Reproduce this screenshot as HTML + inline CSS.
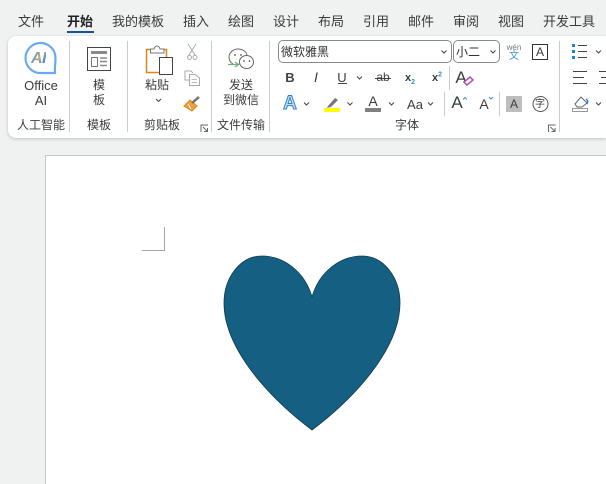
<!DOCTYPE html>
<html lang="zh"><head><meta charset="utf-8"><style>
html,body{margin:0;padding:0;width:606px;height:484px;overflow:hidden}
#wrap{position:relative;width:606px;height:484px;overflow:hidden;background:#f0f1f1;font-family:"Liberation Sans","Noto Sans CJK SC",sans-serif;color:#333}
.t{position:absolute;white-space:nowrap;font-size:12px;line-height:15px;color:#3c3c3c}
.c{transform:translateX(-50%);text-align:center}
.tab{position:absolute;top:12px;font-size:13px;line-height:17px;color:#3a3a3a;white-space:nowrap;font-family:"Noto Sans CJK SC",sans-serif}
.s{position:absolute;width:1px;background:#cbcbcb}
#rib{position:absolute;left:8px;top:36px;width:598px;height:102px;background:#fff;border-radius:8px 0 0 8px;box-shadow:0 1px 3px rgba(0,0,0,.2)}
#page{position:absolute;left:45px;top:155px;width:561px;height:329px;background:#fff;border:1px solid #c6c6c6;border-right:0;border-bottom:0;box-sizing:border-box}
svg{position:absolute;left:0;top:0}
.box{position:absolute;box-sizing:border-box;border:1px solid #8a8a8a;border-radius:5px;height:23px;top:40px;background:#fff}
.ai{position:absolute;left:31px;top:50px;font-size:16px;line-height:17px;font-weight:700;font-style:italic;letter-spacing:-.5px;background:linear-gradient(120deg,#3d8ff0 20%,#c9a86a 50%,#3d8ff0 80%);-webkit-background-clip:text;background-clip:text;color:transparent}
</style></head><body><div id="wrap">
<span class="tab" style="left:18px">文件</span>
<span class="tab" style="left:67px;font-weight:700;color:#222">开始</span>
<span class="tab" style="left:112px">我的模板</span>
<span class="tab" style="left:183px">插入</span>
<span class="tab" style="left:228px">绘图</span>
<span class="tab" style="left:273px">设计</span>
<span class="tab" style="left:318px">布局</span>
<span class="tab" style="left:363px">引用</span>
<span class="tab" style="left:408px">邮件</span>
<span class="tab" style="left:453px">审阅</span>
<span class="tab" style="left:498px">视图</span>
<span class="tab" style="left:543px">开发工具</span>
<div style="position:absolute;left:67px;top:31px;width:27px;height:2px;background:#1b4f9e"></div>
<div id="rib"></div>
<div id="page"></div>
<div class="s" style="left:69px;top:41px;height:91px"></div>
<div class="s" style="left:127px;top:41px;height:91px"></div>
<div class="s" style="left:211px;top:41px;height:91px"></div>
<div class="s" style="left:269px;top:41px;height:91px"></div>
<div class="s" style="left:559px;top:41px;height:91px"></div>
<div class="s" style="left:449px;top:66px;height:24px"></div>
<div class="s" style="left:444px;top:92px;height:24px"></div>
<div class="s" style="left:499px;top:92px;height:24px"></div>
<div class="box" style="left:278px;width:174px"></div>
<div class="box" style="left:453px;width:47px"></div>
<span class="t" style="left:281px;top:45px;font-size:12px;color:#333">微软雅黑</span>
<span class="t" style="left:456px;top:45px;font-size:12px;color:#333">小二</span>

<span class="t c" style="left:41px;top:78px;font-size:13px">Office</span>
<span class="t c" style="left:41px;top:93px;font-size:13px">AI</span>
<span class="t c" style="left:99px;top:78px">模</span>
<span class="t c" style="left:99px;top:93px">板</span>
<span class="t c" style="left:157px;top:78px">粘贴</span>
<span class="t c" style="left:241px;top:78px">发送</span>
<span class="t c" style="left:241px;top:93px">到微信</span>
<span class="t c" style="left:41px;top:118px">人工智能</span>
<span class="t c" style="left:99px;top:118px">模板</span>
<span class="t c" style="left:162px;top:118px">剪贴板</span>
<span class="t c" style="left:241px;top:118px">文件传输</span>
<span class="t c" style="left:407px;top:118px">字体</span>

<span class="t c" style="left:290px;top:70px;font-size:13px;font-weight:700;color:#444">B</span>
<span class="t c" style="left:316px;top:70px;font-style:italic;font-size:14px">I</span>
<span class="t c" style="left:342px;top:70px;font-size:13px">U</span>
<span class="t c" style="left:383px;top:70px;font-size:12px;color:#444">ab</span>
<span class="t c" style="left:410px;top:71px;font-weight:700;font-size:11px">x<sub style="font-size:7px;color:#3a8fc8;line-height:0">2</sub></span>
<span class="t c" style="left:437px;top:71px;font-weight:700;font-size:11px">x<sup style="font-size:7px;color:#3a8fc8;line-height:0">2</sup></span>
<span class="t c" style="left:461px;top:68px;font-size:17px;line-height:19px">A</span>
<span class="t c" style="left:290px;top:94px;font-size:19px;line-height:20px;font-weight:700;color:#bfe0f7;-webkit-text-stroke:1px #2f7fd0">A</span>
<span class="t c" style="left:373px;top:94px;font-size:14px;line-height:15px">A</span>
<span class="t c" style="left:415px;top:97px;font-size:13px">Aa</span>
<span class="t c" style="left:457px;top:94px;font-size:17px;line-height:18px">A</span>
<span class="t c" style="left:484px;top:95px;font-size:14px;line-height:18px">A</span>
<div style="position:absolute;left:506px;top:96px;width:16px;height:16px;background:#bdbdbd"></div>
<span class="t c" style="left:514px;top:97px;font-size:12px;line-height:15px">A</span>
<span class="t c" style="left:540px;top:97px;font-size:10px;line-height:15px">字</span>
<span class="t c" style="left:514px;top:43px;font-size:8px;line-height:9px;color:#777">wén</span>
<span class="t c" style="left:514px;top:51px;font-size:10px;line-height:11px;color:#3a9ad0">文</span>
<span class="t c" style="left:540px;top:45px;font-size:12px;line-height:14px">A</span>
<span class="ai">AI</span>

<svg width="606" height="484" viewBox="0 0 606 484" fill="none">
<path d="M312 297C305 272 284 256 262 256C240 256 224 278 224 303C224 350 272 400 312 430C352 400 400 350 400 303C400 278 384 256 362 256C340 256 319 272 312 297Z" fill="#156082" stroke="#0e3b50" stroke-width=".8"/>
<path d="M141.500 250.500H164.500V227" stroke="#a8a8a8"/>
<path d="M55 73H41A15 15 0 1 1 55.500 58C55.500 63 54.500 68 55 73Z" stroke="#6aa9f4" stroke-width="2.200"/>
<rect x="87.500" y="47.500" width="23" height="23" stroke="#444"/>
<path d="M91 51H107V54H91Z" fill="#8a8a8a"/>
<path d="M91.500 57.500H97.500V66.500H91.500Z" stroke="#777"/>
<path d="M100 58H107M100 61.500H107M100 65.500H107" stroke="#888" stroke-width="1.400"/>
<rect x="146.500" y="49.500" width="20" height="23" stroke="#e08614" stroke-width="1.500" fill="#fff"/>
<path d="M150.500 53V49H154C155 45 159 45 160 49H164V53Z" fill="#fff" stroke="#777"/>
<rect x="159.500" y="57.500" width="13" height="17" fill="#fff" stroke="#444"/>
<path d="M156 99l2.500 2.500L161 99" stroke="#444"/>
<path d="M188 44L195 55M196 44L189 55" stroke="#aaa"/><circle cx="189.500" cy="57.500" r="2" stroke="#aaa"/><circle cx="195" cy="57.500" r="2" stroke="#aaa"/>
<path d="M190 80H185V71H191L193 73" stroke="#aaa"/><path d="M189.500 74.500H195L199.500 78V85.500H189.500Z" stroke="#aaa" fill="#fff"/>
<path d="M191.500 79.500H197M191.500 82.500H197" stroke="#bbb"/>
<path d="M190 100L197 106L192 111L184 106Z" fill="#f0a040" stroke="#e08614"/><path d="M192 103L199 97" stroke="#777" stroke-width="2.500"/>
<path d="M188 104L191 109" stroke="#fff"/>
<path d="M201 132V125H208M203 127L207.500 131.500M207.500 128V131.500H204" stroke="#666"/>
<path d="M548.500 132V125H555.500M550.500 127L555 131.500M555 128V131.500H551.500" stroke="#666"/>
<path d="M233 64C229.500 62 229 59 229 57C229 52.500 233.500 49 238 49C243 49 246.500 52 247 55" stroke="#666"/>
<ellipse cx="246.500" cy="62" rx="7" ry="6.500" stroke="#666" fill="#fff"/>
<path d="M228 64.500H238M235 62L238.500 64.500L235 67" stroke="#6cb27c" stroke-width="1.300"/>
<circle cx="235" cy="55" r=".9" fill="#555"/><circle cx="241" cy="55" r=".9" fill="#555"/><circle cx="244" cy="61" r=".9" fill="#555"/><circle cx="249.500" cy="61" r=".9" fill="#555"/>
<path d="M441.500 50.500l2.500 2.500l2.500-2.500M490.500 50.500l2.500 2.500l2.500-2.500M357 76.500l2.500 2.500l2.500-2.500M304 102.500l2.500 2.500l2.500-2.500M347.500 102.500l2.500 2.500l2.500-2.500M389 102.500l2.500 2.500l2.500-2.500M428 102.500l2.500 2.500l2.500-2.500M596 50.500l2.500 2.500l2.500-2.500M596 102.500l2.500 2.500l2.500-2.500" stroke="#444"/>
<path d="M375 78.500H391" stroke="#444"/>
<path d="M338 83.500H347" stroke="#444"/>
<path d="M464 82L470 77L473 80L467 85Z" fill="#fff" stroke="#b04fb8" stroke-width="1.500"/>
<path d="M328 106L335 98L338 100L331 107L327 108Z" fill="#777"/>
<rect x="324" y="108" width="16" height="4" fill="#ffff00"/>
<rect x="365" y="108" width="16" height="4" fill="#808080"/>
<path d="M463 99.500l2-2l2 2" stroke="#3a8fc8"/><path d="M489 97l2 2l2-2" stroke="#3a8fc8"/>
<circle cx="540.500" cy="104" r="7.500" stroke="#555"/>
<rect x="532.500" y="44.500" width="15" height="15" stroke="#333"/>
<path d="M572 44h3v3h-3zM572 50h3v3h-3zM572 56h3v3h-3z" fill="#1a85d6"/>
<path d="M578 45.500H587M578 51.500H587M578 57.500H587" stroke="#444"/>
<path d="M573 71.500H587M573 77.500H584M573 83.500H587M599 71.500H606M601 77.500H606M599 83.500H606" stroke="#444"/>
<path d="M575 104L581 97L587 103L582 107H577Z" stroke="#666"/><path d="M586 99C588 100 588 103 587 104" stroke="#2f80cf" stroke-width="1.500"/>
<rect x="572.500" y="108.500" width="15" height="3" stroke="#999"/>
</svg>
</div></body></html>
